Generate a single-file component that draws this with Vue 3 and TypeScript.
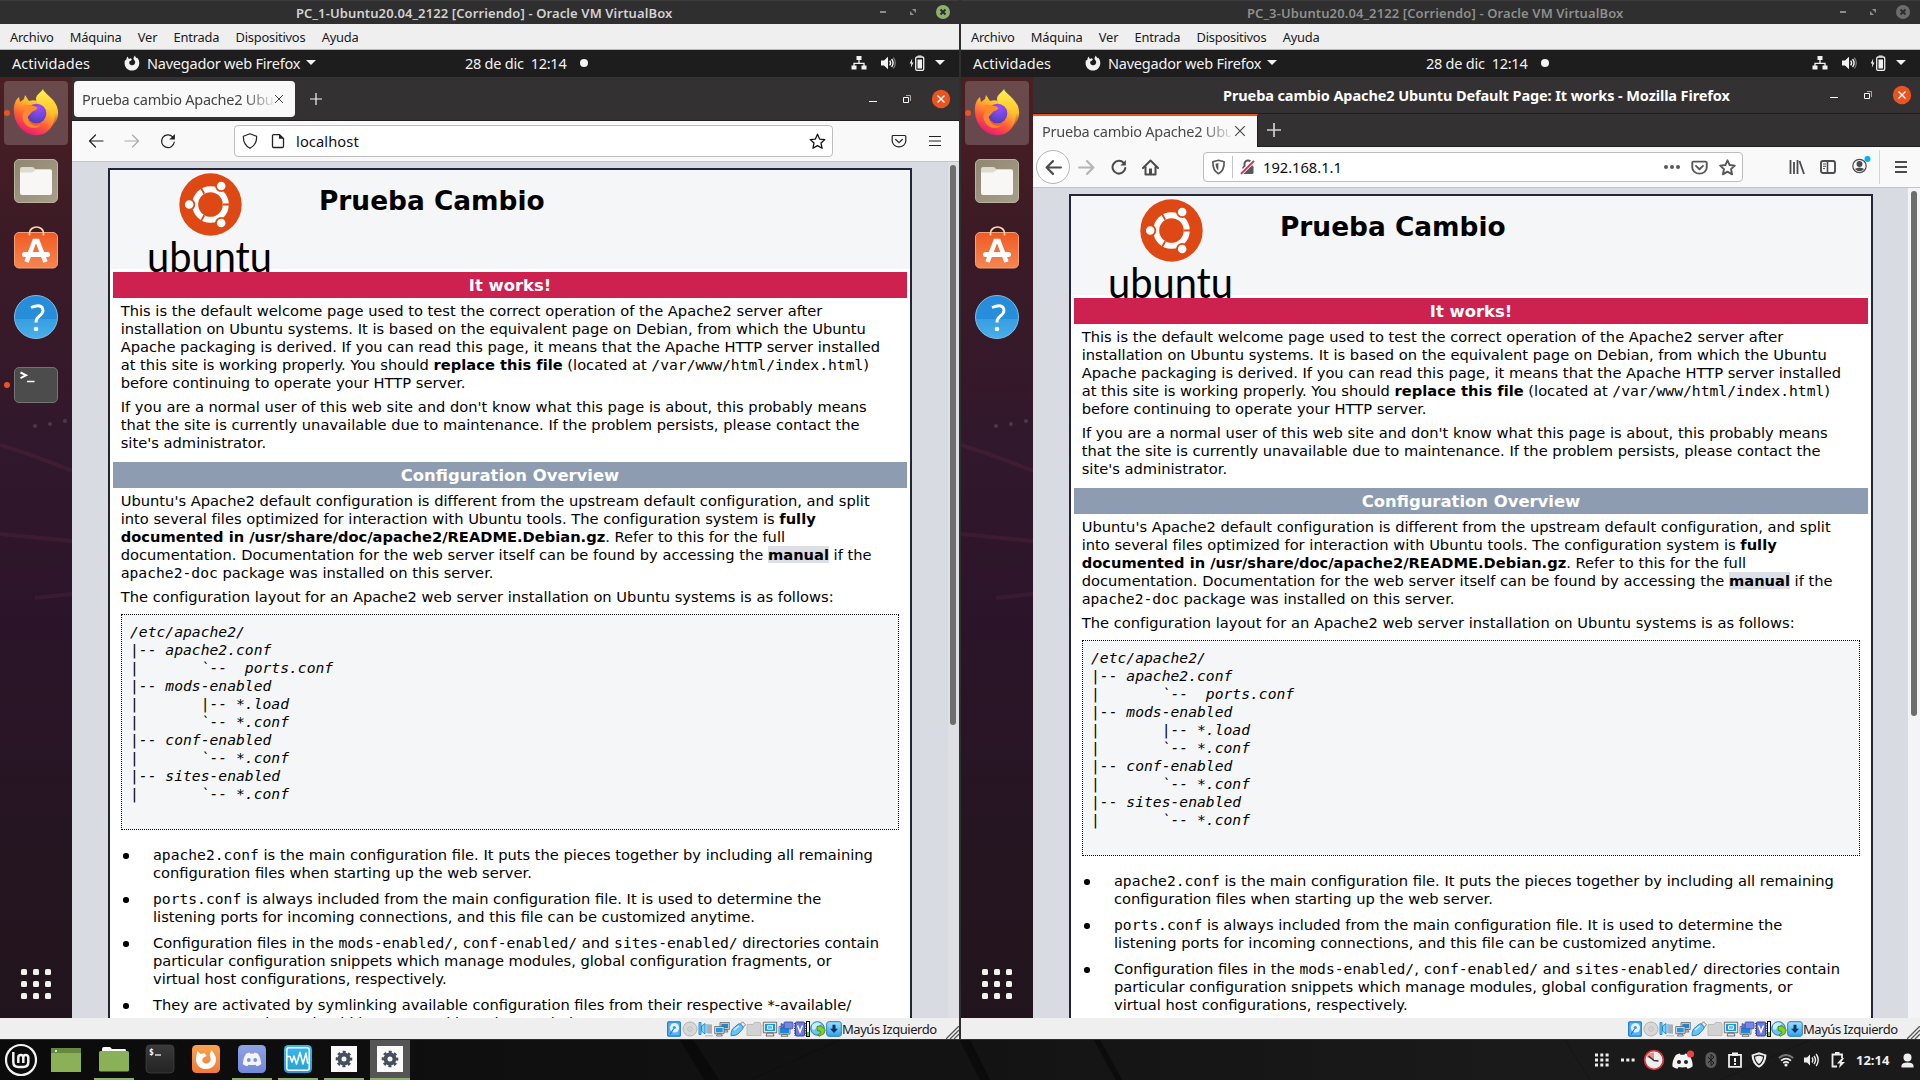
<script setup lang="ts">
interface Machine {
  id: number
  title: string
  active: boolean
  chrome: 'modern' | 'classic'
  url: string
  terminal: boolean
}

const machines: Machine[] = [
  { id: 1, title: 'PC_1-Ubuntu20.04_2122 [Corriendo] - Oracle VM VirtualBox', active: true, chrome: 'modern', url: 'localhost', terminal: true },
  { id: 3, title: 'PC_3-Ubuntu20.04_2122 [Corriendo] - Oracle VM VirtualBox', active: false, chrome: 'classic', url: '192.168.1.1', terminal: false },
]

const menu: string[] = ['Archivo', 'Máquina', 'Ver', 'Entrada', 'Dispositivos', 'Ayuda']

const tree: string = [
  '/etc/apache2/',
  '|-- apache2.conf',
  '|       `--  ports.conf',
  '|-- mods-enabled',
  '|       |-- *.load',
  '|       `-- *.conf',
  '|-- conf-enabled',
  '|       `-- *.conf',
  '|-- sites-enabled',
  '|       `-- *.conf',
  ' ',
].join('\n')

const devices: string[] = ['hdd', 'cd', 'audio', 'net', 'usb', 'folder', 'display', 'rec']

interface Task { icon: string; open: boolean; current: boolean }
const tasks: Task[] = [
  { icon: 'desktop', open: false, current: false },
  { icon: 'nemo', open: true, current: false },
  { icon: 'term', open: false, current: false },
  { icon: 'fox', open: false, current: false },
  { icon: 'discord', open: true, current: false },
  { icon: 'monitor', open: true, current: false },
  { icon: 'gear', open: true, current: false },
  { icon: 'gear', open: true, current: true },
]
</script>

<template>
  <div class="screen">
    <svg class="defs" width="0" height="0" aria-hidden="true">
      <defs>
        <linearGradient id="gFox" x1="0.8" y1="0" x2="0.3" y2="1">
          <stop offset="0" stop-color="#fff14a" /><stop offset="0.35" stop-color="#ffb32c" />
          <stop offset="0.65" stop-color="#ff5a38" /><stop offset="1" stop-color="#e6127d" />
        </linearGradient>
        <linearGradient id="gTail" x1="0" y1="0" x2="0" y2="1">
          <stop offset="0" stop-color="#fff44f" /><stop offset="0.6" stop-color="#ffc02e" /><stop offset="1" stop-color="#ff7139" stop-opacity="0.1" />
        </linearGradient>
        <radialGradient id="gGlobe" cx="0.6" cy="0.2" r="0.9">
          <stop offset="0" stop-color="#a04bff" /><stop offset="0.5" stop-color="#6e48d8" /><stop offset="1" stop-color="#4a3aa8" />
        </radialGradient>
        <linearGradient id="gBag" x1="0" y1="0" x2="0" y2="1"><stop offset="0" stop-color="#f05a24" /><stop offset="1" stop-color="#f58650" /></linearGradient>
        <linearGradient id="gFile" x1="0" y1="0" x2="1" y2="1"><stop offset="0" stop-color="#8e866f" /><stop offset="1" stop-color="#a89f8b" /></linearGradient>
        <linearGradient id="gBlue" x1="0" y1="0" x2="0" y2="1"><stop offset="0" stop-color="#9fe0ff" /><stop offset="1" stop-color="#2fa2ee" /></linearGradient>
        <linearGradient id="gHelp" x1="0" y1="0" x2="0" y2="1"><stop offset="0" stop-color="#268cd9" /><stop offset="0.54" stop-color="#268fdc" /><stop offset="0.55" stop-color="#379fe2" /><stop offset="1" stop-color="#4aaee8" /></linearGradient>
        <linearGradient id="gOrange" x1="0" y1="0" x2="0" y2="1"><stop offset="0" stop-color="#f9a351" /><stop offset="1" stop-color="#f07a36" /></linearGradient>
        <linearGradient id="gDisc" x1="0" y1="0" x2="0" y2="1"><stop offset="0" stop-color="#8ea1e1" /><stop offset="1" stop-color="#7289da" /></linearGradient>
        <linearGradient id="gCyan" x1="0" y1="0" x2="0" y2="1"><stop offset="0" stop-color="#35b9f0" /><stop offset="1" stop-color="#2aa0cf" /></linearGradient>
        <linearGradient id="gTerm" x1="0" y1="0" x2="0" y2="1"><stop offset="0" stop-color="#3a3a3a" /><stop offset="1" stop-color="#232323" /></linearGradient>
      </defs>
      <symbol id="firefox" viewBox="0 0 48 48">
        <path d="M2 25C1 17 4 11 7 9l1 5 4-3 1-4 4 6c3-1 6-1 8 0l3 3 3-8 6 8 4 4c3 7 2 13-1 18-4 7-11 10-18 9C11 46 3 36 2 25z" fill="url(#gFox)" />
        <path d="M31 1c1 5 14 10 15 22 1 8-4 16-12 18 6-6 6-14 2-19-3-4-12-4-12-11 0-5 5-6 7-10z" fill="url(#gTail)" />
        <circle cx="24.500" cy="25.500" r="9.800" fill="url(#gGlobe)" />
        <path d="M8 19c5-3 9-2 14-1 2 1 4 1 3 3-2 2-5 2-6 4-2 3-4 3-3 6 2 6 7 8 13 6-5 5-14 3-17-3-3-5-1-10 2-12z" fill="#ff8a2b" />
      </symbol>
      <symbol id="foxmono" viewBox="0 0 16 16">
        <path d="M1 5l1 .6L3.200 1.500 5 4l1.600-.8L8 4.300 6.600 6H5.800c-1 1.200-.8 3.200 1 4 2 .9 4.300-.3 4.400-2.400 0-1.200-.5-2-1.300-2.800C9 3.500 9.800 1.700 11 .4c.2 1.400 1 2 2 2.900V2.400c1.500 1.500 2.300 3.600 2.300 5.500 0 4.300-3.200 7.700-7.400 7.700S.6 12.300.6 8.300C.6 7 .7 6 1 5z" fill="#f2f2f2" />
      </symbol>
      <symbol id="net3" viewBox="0 0 16 16">
        <path d="M5.500 1h5v4h-5zM.5 10.500h5v4h-5zM10.500 10.500h5v4h-5z" fill="#f2f2f2" /><path d="M8 5v3M3 11V8.300h10V11" fill="none" stroke="#f2f2f2" stroke-width="1.300" />
      </symbol>
      <symbol id="vol" viewBox="0 0 16 16">
        <path d="M1 5.500h3L8 1.700v12.600L4 10.500H1z" fill="currentColor" /><path d="M9.700 5.600q1.800 2.400 0 4.800M11.600 4q3 4 0 8" fill="none" stroke="currentColor" stroke-width="1.400" /><path d="M13.400 2.600q3.800 5.400 0 10.800" fill="none" stroke="currentColor" stroke-width="1.200" opacity="0.450" />
      </symbol>
      <symbol id="batt" viewBox="0 0 16 16">
        <path d="M3.200 3.500L.7 8.400h1.600l-.5 4.300L4.500 7.500H2.900z" fill="#f2f2f2" /><rect x="6.700" y="2" width="8" height="13.300" rx="1.300" fill="none" stroke="#f2f2f2" stroke-width="1.300" /><path d="M8.500 4.500h4.500v9H8.500zM8.700.4h4v1.200h-4z" fill="#f2f2f2" />
      </symbol>
      <symbol id="star" viewBox="0 0 16 16">
        <path d="M8 1.200l2 4.500 4.900.5-3.600 3.300 1 4.900L8 11.900l-4.300 2.500 1-4.900L1.100 6.200 6 5.700z" fill="none" stroke="currentColor" stroke-linejoin="round" />
      </symbol>
      <symbol id="pocket" viewBox="0 0 16 16">
        <path d="M2.200 2.500h11.600q1 0 1 1V8a6.800 5.800 0 0 1-13.600 0V3.500q0-1 1-1z" fill="none" stroke="currentColor" /><path d="M4.700 6.500L8 9.600l3.300-3.100" fill="none" stroke="currentColor" stroke-linecap="round" stroke-linejoin="round" />
      </symbol>
      <symbol id="back" viewBox="0 0 16 16"><path d="M15 8H1.500M7.500 2L1.500 8l6 6" fill="none" stroke="currentColor" stroke-linecap="round" stroke-linejoin="round" /></symbol>
      <symbol id="fwd" viewBox="0 0 16 16"><path d="M1 8h13.500M8.500 2l6 6-6 6" fill="none" stroke="currentColor" stroke-linecap="round" stroke-linejoin="round" /></symbol>
      <symbol id="reload" viewBox="0 0 16 16"><path d="M14.300 9A6.400 6.400 0 1 1 12.700 3.900" fill="none" stroke="currentColor" stroke-linecap="round" /><path d="M14.900.9v5.600H9.300z" fill="currentColor" /></symbol>
      <symbol id="cross" viewBox="0 0 10 10"><path d="M1 1l8 8M9 1L1 9" fill="none" stroke="currentColor" /></symbol>

      <symbol id="hdd" viewBox="0 0 16 16"><rect x="1.700" y=".8" width="12.600" height="14.400" rx="1" fill="#58b4fa" stroke="#1577d8" stroke-width="1.200" /><ellipse cx="8.500" cy="6.800" rx="4.600" ry="4.800" fill="#e2f3ff" /><circle cx="8.300" cy="6.500" r="1.600" fill="#4693df" /><path d="M7.500 8L4 13.300" stroke="#2a72c8" stroke-width="1.200" /></symbol>
      <symbol id="cd" viewBox="0 0 16 16"><circle cx="8" cy="8" r="7" fill="#d8d8d8" stroke="#b4b4b4" /><circle cx="8" cy="8" r="2.200" fill="#eee" stroke="#aaa" stroke-width=".8" /><circle cx="8" cy="8" r=".7" fill="#999" /></symbol>
      <symbol id="audio" viewBox="0 0 16 16"><path d="M9.500 3H14v10H9.500zM7 14h8v1.500H7z" fill="#c7c7c7" /><path d="M10 5h4M10 7h4M10 9h4M10 11h4" stroke="#888" stroke-width=".8" /><path d="M1 1.500h2v12h-2zM3.500 5L7 2.600V13L3.500 10z" fill="#7dcfff" stroke="#1683c5" stroke-width=".9" /><path d="M9 3v9" stroke="#3ca4ea" fill="none" /></symbol>
      <symbol id="net" viewBox="0 0 16 16"><path d="M6 1.500h9.300v7H6zM9 9h4l1 2H8z" fill="#d8d8d8" stroke="#555" stroke-width=".7" /><path d="M7.300 2.800h6.700v4.400H7.300z" fill="#1688dc" /><path d="M.7 5.500H10v7.200H.7zM3.400 13h4l1 2h-6z" fill="#e2e2e2" stroke="#555" stroke-width=".7" /><path d="M2 6.800h6.700v4.500H2z" fill="#1c98e9" /></symbol>
      <symbol id="usb" viewBox="0 0 16 16"><path d="M10 3.500L12.500.8l3 3L13 6.500z" fill="#eee" stroke="#666" stroke-width=".8" /><path d="M1 14.700q-.3-3.600 1.500-6.700L8 3.300q1.700-1.200 3.200.2l1.500 1.800q1 1.400-.3 3L8 13q-2.600 2-7 1.700z" fill="#65c3f6" stroke="#2678b6" stroke-width=".9" /><path d="M4 9l5-4" stroke="#d4f2ff" stroke-width="1.500" /></symbol>
      <symbol id="folder" viewBox="0 0 16 16"><path d="M1 14.500V3.500h6l1.500-2H14l1 2v11z" fill="#d2d2d2" stroke="#bcbcbc" /></symbol>
      <symbol id="display" viewBox="0 0 16 16"><path d="M1.300 1.200h13.400v10.600H1.300zM5 12h6l1 3H4z" fill="#e5e5e5" stroke="#555" stroke-width=".8" /><path d="M3 3h10v7H3z" fill="#169be8" /><path d="M5.500 4.700h5v3.500h-5z" fill="#57b7f1" stroke="#fff" /></symbol>
      <symbol id="rec" viewBox="0 0 16 16"><path d="M1 5.500h11v7.700H1zM4 13.300h5l1 2H3z" fill="#ddd" stroke="#555" stroke-width=".7" /><path d="M2 6.500h9v5.700H2z" fill="#128ade" /><rect x="6" y="1" width="9" height="6.800" rx="1" fill="#7487e5" stroke="#3848a4" stroke-width=".8" /><path d="M3 2.500l3 1v3l-3 1z" fill="#6476d3" stroke="#3848a4" stroke-width=".6" /></symbol>
      <symbol id="cpu" viewBox="0 0 12 16"><rect x="1.500" y="1" width="9" height="14" rx="1" fill="#6b77d8" stroke="#3f458f" /><path d="M.5 2v12.500M11.500 2v12.500" stroke="#3f458f" stroke-dasharray="1.200 1.200" /><path d="M3.500 4.500L6 11l2.500-6.500" fill="none" stroke="#fff" stroke-width="1.500" /></symbol>
      <symbol id="mouse" viewBox="0 0 16 16"><circle cx="7.500" cy="7.500" r="6.800" fill="#69c4f8" stroke="#2379af" /><path d="M2 4q5-5 9-1L7 6 4 9 2 8z" fill="#c7edff" /><path d="M7 5.500l4-.7 4.300 4-1.600 4.200-4.700 2.300-1-1.500 3-2-1-1.800-2.600-.3z" fill="#87cf27" stroke="#3f8a12" stroke-width=".9" /></symbol>
      <symbol id="hostkey" viewBox="0 0 16 16"><rect x=".7" y=".7" width="14.600" height="14.600" rx="2.300" fill="url(#gBlue)" stroke="#2b7fb0" /><path d="M6.500 3.800h3v4H12l-4 4.300-4-4.300h2.500z" fill="#0b3468" /></symbol>

      <symbol id="desktop" viewBox="0 0 32 32"><path d="M1 4h30v24H1z" fill="#8bb158" /><path d="M1 4h30v5H1z" fill="#67883f" /><circle cx="6" cy="7" r="1" fill="#fff" /></symbol>
      <symbol id="nemo" viewBox="0 0 32 32"><path d="M4 8V5q0-2 2-2h6l2 2h13q1 0 1 2v3H4z" fill="#fff" /><rect x="1" y="7" width="30" height="20.500" rx="1.500" fill="#8bb158" /></symbol>
      <symbol id="term" viewBox="0 0 32 32"><rect x="2" y="1" width="28" height="28" rx="4" fill="url(#gTerm)" stroke="#4a4a4a" stroke-width=".6" /><path d="M11 11h6" stroke="#fff" stroke-width="1.200" /><text x="5" y="10.500" font-size="8" font-weight="bold" font-family="DejaVu Sans Mono, monospace" fill="#fff">$</text></symbol>
      <symbol id="fox" viewBox="0 0 32 32"><rect x="2" y="1" width="28" height="28" rx="4.500" fill="url(#gOrange)" /><path d="M7.500 7l3 3 4-.8 2.200 2.700-3.200 1.700c-2.600 2.600-.7 6.200 3 5.800 3.600-.4 5-3.600 3.600-6.500-1-2.300.2-4.500 1.800-6.800.3 2 3.600 4.300 4.100 8.500.6 5.700-3.800 10.500-10 10.500C10 25.100 5.800 20.500 6 15.500 6 11.900 7 10 7.500 7z" fill="#fff" /></symbol>
      <symbol id="discface" viewBox="0 0 24 18"><path d="M4.500 2.200Q7 .9 9 .7l.8 1.400q2.200-.3 4.400 0L15 .7q2 .2 4.500 1.500Q24 9 23.300 15.300 20.700 17.200 17.700 17.700l-1.300-2q-4.400 1-8.800 0l-1.300 2Q3.300 17.200.7 15.300 0 9 4.500 2.200z" fill="#f4f4f4" /></symbol>
      <symbol id="discord" viewBox="0 0 32 32"><rect x="2" y="1" width="28" height="28" rx="4.500" fill="url(#gDisc)" /><use href="#discface" x="6" y="8" width="20" height="14.500" /><circle cx="12.800" cy="16" r="1.900" fill="#7b90dd" /><circle cx="19.200" cy="16" r="1.900" fill="#7b90dd" /></symbol>
      <symbol id="monitor" viewBox="0 0 32 32"><rect x="2" y="1" width="28" height="28" rx="4.500" fill="url(#gCyan)" /><rect x="4.800" y="3.800" width="22.400" height="22.400" rx="2" fill="none" stroke="#fff" stroke-width="1.500" /><path d="M5 12.500h3l2 5.500 2-6 2.500 8L18 8.500l3 11.500 3-11 1.500 10h2" fill="none" stroke="#fff" stroke-width="1.500" stroke-linejoin="round" /></symbol>
      <symbol id="gear" viewBox="0 0 32 32"><path d="M3 2h26v26H3z" fill="#fafafa" /><circle cx="16" cy="15" r="4.500" fill="none" stroke="#44505f" stroke-width="4" /><circle cx="16" cy="15" r="7" fill="none" stroke="#44505f" stroke-width="2.600" stroke-dasharray="3 2.498" stroke-dashoffset="1.500" /></symbol>
    </svg>

    <div class="machines">
      <section v-for="m in machines" :key="m.id" class="machine" :class="m.chrome">
        <header class="vm-title" :class="{ dim: !m.active }">
          <span class="vm-name">{{ m.title }}</span>
          <svg class="vm-controls" width="76" height="24" viewBox="0 0 76 24">
            <path d="M3 12h6" stroke="#8c8c8c" stroke-width="2" />
            <path d="M35 9h4v4zM33 11v4h4z" fill="#8c8c8c" />
            <circle cx="66" cy="12" r="7" :fill="m.active ? '#8fb06c' : '#6c6c6c'" />
            <path d="M63.500 9.500l5 5M68.500 9.500l-5 5" stroke="#2c2c2c" stroke-width="2" />
          </svg>
        </header>
        <nav class="vm-menu"><span v-for="item in menu" :key="item">{{ item }}</span></nav>

        <div class="guest">
          <div class="topbar">
            <span class="activities">Actividades</span>
            <svg class="app-icon" width="16" height="16"><use href="#foxmono" /></svg>
            <span class="app-name">Navegador web Firefox</span>
            <i class="caret"></i>
            <span class="clock">28 de dic&nbsp; 12:14</span>
            <i class="dot"></i>
            <div class="indicators">
              <svg width="16" height="16"><use href="#net3" /></svg>
              <svg width="16" height="16"><use href="#vol" /></svg>
              <svg width="16" height="16"><use href="#batt" /></svg>
              <i class="caret"></i>
            </div>
          </div>

          <div class="workspace">
            <aside class="dock">
              <svg class="wall" width="72" height="941" viewBox="0 0 72 941">
                <g fill="none" stroke="#8b4050" stroke-opacity=".16" stroke-width="4">
                  <path d="M0 368q36 11 72 26M0 457l72 7M35 521l37-4" />
                </g>
                <g fill="#8b7080" fill-opacity=".35"><circle cx="35" cy="349" r="2" /><circle cx="50" cy="347" r="2" /><circle cx="65" cy="344" r="2" /></g>
              </svg>
              <div class="launcher focused"><i class="running"></i><svg class="lift" width="48" height="48"><use href="#firefox" /></svg></div>
              <div class="launcher">
                <svg width="44" height="44" viewBox="0 0 44 44"><rect x=".5" y=".5" width="43" height="43" rx="4.500" fill="url(#gFile)" stroke="#b9b29f" /><path d="M6 13V10q0-2 2-2h10q2 0 3 2h15q2 0 2 2v4H6z" fill="#dedace" /><path d="M6 13.500h12l4-2.500h14q2 0 2 2v21q0 2-2 2H8q-2 0-2-2z" fill="#f8f7f5" /></svg>
              </div>
              <div class="launcher">
                <svg class="lift" width="44" height="44" viewBox="0 0 44 44"><rect x=".5" y="6.500" width="43" height="35.500" rx="4.500" fill="url(#gBag)" stroke="#f6a077" /><path d="M15.500 9.500V7a7 6 0 0 1 14 0v2.500" fill="none" stroke="#f7d9a8" stroke-width="1.700" /><path d="M12.500 36l8-21h3l8 21" fill="none" stroke="#fff" stroke-width="4.500" /><path d="M10.500 28.500h23" stroke="#fff" stroke-width="5" stroke-linecap="round" /></svg>
              </div>
              <div class="launcher">
                <svg width="44" height="44" viewBox="0 0 44 44"><circle cx="22" cy="22" r="21.500" fill="url(#gHelp)" stroke="#7bbfe8" /><path d="M17 12.500q11.500-4.500 12 3 0 3-4 5.800-3.200 2.500-3 6.200" fill="none" stroke="#fff" stroke-width="2.900" /><circle cx="22" cy="34" r="2.300" fill="#fff" /></svg>
              </div>
              <div v-if="m.terminal" class="launcher">
                <i class="running"></i>
                <svg width="44" height="44" viewBox="0 0 44 44"><rect x=".5" y="4.500" width="43" height="35" rx="4.500" fill="#4c4c4c" stroke="#747474" /><path d="M6.500 9.500l5.500 2.800-5.500 2.800" fill="none" stroke="#fff" stroke-width="2" /><path d="M13 18.500h7.500" stroke="#fff" stroke-width="1.500" /></svg>
              </div>
              <div class="apps"><i v-for="n in 9" :key="n"></i></div>
            </aside>

            <main class="browser">
              <template v-if="m.chrome === 'modern'">
                <div class="tabstrip">
                  <div class="tab"><span class="tab-label">Prueba cambio Apache2 Ubuntu</span><svg width="10" height="10"><use href="#cross" /></svg></div>
                  <svg class="plus" width="12" height="12" viewBox="0 0 12 12"><path d="M6 0v12M0 6h12" stroke="#f5f5f5" stroke-width="1.200" /></svg>
                  <svg class="winctl" width="86" height="20" viewBox="-10 0 86 20"><path d="M-6 12.500h8" stroke="#fff" /><path d="M28.500 8.500h5v5h-5z" fill="none" stroke="#fff" /><path d="M31 6.500h4.500V12" fill="none" stroke="#aaa" /><circle cx="66" cy="10" r="9.200" fill="#e95420" /><path d="M62.500 6.500l7 7M69.500 6.500l-7 7" stroke="#fff" stroke-width="1.400" /></svg>
                </div>
                <div class="toolbar">
                  <svg class="b-back" width="16" height="16"><use href="#back" /></svg>
                  <svg class="b-fwd" width="16" height="16"><use href="#fwd" /></svg>
                  <svg class="b-rel" width="16" height="16"><use href="#reload" /></svg>
                  <div class="urlbar">
                    <svg width="16" height="16" viewBox="0 0 16 16"><path d="M8 .8l6.600 2.500Q15 11.500 8 15.300 1 11.500 1.400 3.300z" fill="none" stroke="#222" stroke-linejoin="round" stroke-width="1.200" /></svg>
                    <svg class="pageicon" width="16" height="16" viewBox="0 0 16 16"><path d="M9.500 1.600H3.700q-1.200 0-1.200 1.200v10.500q0 1.200 1.200 1.200h8.600q1.200 0 1.200-1.200V5.500z" fill="none" stroke="#222" stroke-width="1.300" /><path d="M9 1.200v4.600h5z" fill="#222" /></svg>
                    <span class="address">{{ m.url }}</span>
                    <svg class="bookmark" width="17" height="17"><use href="#star" /></svg>
                  </div>
                  <svg class="b-pocket" width="16" height="16"><use href="#pocket" /></svg>
                  <svg class="b-menu" width="12" height="12" viewBox="0 0 12 12"><path d="M0 1.500h12M0 6h12M0 10.500h12" stroke="#222" stroke-width="1.200" /></svg>
                </div>
              </template>
              <template v-else>
                <div class="ff-title">
                  <span class="ff-name">Prueba cambio Apache2 Ubuntu Default Page: It works - Mozilla Firefox</span>
                  <svg class="winctl" width="86" height="20" viewBox="-10 0 86 20"><path d="M-6 12.500h8" stroke="#fff" /><path d="M28.500 8.500h5v5h-5z" fill="none" stroke="#fff" /><path d="M31 6.500h4.500V12" fill="none" stroke="#aaa" /><circle cx="66" cy="10" r="9.200" fill="#e95420" /><path d="M62.500 6.500l7 7M69.500 6.500l-7 7" stroke="#fff" stroke-width="1.400" /></svg>
                </div>
                <div class="tabstrip">
                  <div class="tab"><span class="tab-label">Prueba cambio Apache2 Ubuntu</span><svg width="12" height="12"><use href="#cross" /></svg></div>
                  <svg class="plus" width="14" height="14" viewBox="0 0 14 14"><path d="M7 0v14M0 7h14" stroke="#d0d0d0" stroke-width="1.700" /></svg>
                </div>
                <div class="toolbar">
                  <div class="round"><svg width="17" height="17"><use href="#back" /></svg></div>
                  <svg class="b-fwd" width="17" height="17"><use href="#fwd" /></svg>
                  <svg class="b-rel" width="16" height="16"><use href="#reload" /></svg>
                  <svg class="b-home" width="17" height="17" viewBox="0 0 17 17"><path d="M1 9l7.500-7.500L16 9M3.500 8v7.500h10V8" fill="none" stroke="#4c4c4f" stroke-width="2" stroke-linejoin="round" stroke-linecap="round" /><path d="M7 9.500h3V15H7z" fill="#4c4c4f" /></svg>
                  <div class="urlbar">
                    <svg width="15" height="16" viewBox="0 0 15 16"><path d="M7.500 1.300l5.600 1.400q.4 8.600-5.600 12-6-3.400-5.600-12z" fill="none" stroke="#58585b" stroke-width="1.700" stroke-linejoin="round" /><path d="M7.300 4v7.500Q4.500 9 4.600 4.700z" fill="#58585b" /></svg>
                    <i class="sep"></i>
                    <svg class="lock" width="16" height="16" viewBox="0 0 16 16"><path d="M4.500 7V5a3.500 3.500 0 0 1 7 0v2" fill="none" stroke="#58585b" stroke-width="2" /><rect x="2.500" y="7" width="11" height="8" rx="1.300" fill="#58585b" /><path d="M1 14.500L14 1.500" stroke="#f9f9fa" stroke-width="4" /><path d="M1 14.800L14 1.800" stroke="#e22850" stroke-width="1.900" /></svg>
                    <span class="address">{{ m.url }}</span>
                    <svg class="more" width="16" height="6" viewBox="0 0 16 6"><circle cx="2" cy="3" r="2" /><circle cx="8" cy="3" r="2" /><circle cx="14" cy="3" r="2" /></svg>
                    <svg class="pk" width="17" height="17"><use href="#pocket" /></svg>
                    <svg class="st" width="17" height="17"><use href="#star" /></svg>
                  </div>
                  <svg class="b-lib" width="16" height="16" viewBox="0 0 16 16"><path d="M1.500 1v14M5 3v12M8.500 1v14M10.500 2L15 15" fill="none" stroke="#4c4c4f" stroke-width="1.800" /></svg>
                  <svg class="b-side" width="16" height="16" viewBox="0 0 16 16"><rect x="1" y="2" width="14" height="12" rx="2" fill="none" stroke="#4c4c4f" stroke-width="1.900" /><path d="M7.500 2v12" stroke="#4c4c4f" stroke-width="1.600" /><path d="M3 5h3M3 7.300h3M3 9.600h2" stroke="#4c4c4f" /></svg>
                  <svg class="b-acct" width="20" height="20" viewBox="0 0 20 20"><circle cx="8.500" cy="11" r="6.700" fill="none" stroke="#4c4c4f" stroke-width="1.200" /><circle cx="8.500" cy="9" r="3" fill="#4c4c4f" /><path d="M3.800 14q4.700-3 9.400 0-4.400 4.500-9.400 0z" fill="#4c4c4f" /><circle cx="16.500" cy="4" r="3" fill="#00b3f4" /></svg>
                  <i class="tsep"></i>
                  <svg class="b-menu" width="12" height="12" viewBox="0 0 12 12"><path d="M0 1h12M0 6h12M0 11h12" stroke="#4c4c4f" stroke-width="1.900" /></svg>
                </div>
              </template>

              <div class="viewport">
                <div class="page-area">
                  <article class="main-page">
                    <div class="page-header">
                      <svg class="logo" width="124" height="102" viewBox="0 0 124 102">
                        <circle cx="62.500" cy="31.500" r="31.200" fill="#dd4814" />
                        <circle cx="62.500" cy="31.500" r="15.300" fill="none" stroke="#fff" stroke-width="6" />
                        <path d="M75 31.500h8M56.300 20.700l-4-6.900M56.300 42.300l-4 6.900" stroke="#dd4814" stroke-width="1.800" />
                        <g fill="#fff" stroke="#dd4814" stroke-width="1.800"><circle cx="41.200" cy="31.500" r="5.200" /><circle cx="73.200" cy="13" r="5.200" /><circle cx="73.200" cy="50" r="5.200" /></g>
                        <text x="-1" y="98.700" textLength="125" lengthAdjust="spacingAndGlyphs" font-family="Lato, sans-serif" font-size="42">ubuntu</text>
                      </svg>
                      <span class="headline">Prueba Cambio</span>
                    </div>
                    <div class="content">
                      <h2 class="works">It works!</h2>
                      <div class="text">
                        <p>This is the default welcome page used to test the correct operation of the Apache2 server after installation on Ubuntu systems. It is based on the equivalent page on Debian, from which the Ubuntu Apache packaging is derived. If you can read this page, it means that the Apache HTTP server installed at this site is working properly. You should <b>replace this file</b> (located at <code>/var/www/html/index.html</code>) before continuing to operate your HTTP server.</p>
                        <p>If you are a normal user of this web site and don't know what this page is about, this probably means that the site is currently unavailable due to maintenance. If the problem persists, please contact the site's administrator.</p>
                      </div>
                      <h2>Configuration Overview</h2>
                      <div class="text">
                        <p>Ubuntu's Apache2 default configuration is different from the upstream default configuration, and split into several files optimized for interaction with Ubuntu tools. The configuration system is <b>fully documented in /usr/share/doc/apache2/README.Debian.gz</b>. Refer to this for the full documentation. Documentation for the web server itself can be found by accessing the <a>manual</a> if the <code>apache2-doc</code> package was installed on this server.</p>
                        <p>The configuration layout for an Apache2 web server installation on Ubuntu systems is as follows:</p>
                        <pre>{{ tree }}</pre>
                        <ul>
                          <li><code>apache2.conf</code> is the main configuration file. It puts the pieces together by including all remaining configuration files when starting up the web server.</li>
                          <li><code>ports.conf</code> is always included from the main configuration file. It is used to determine the listening ports for incoming connections, and this file can be customized anytime.</li>
                          <li>Configuration files in the <code>mods-enabled/</code>, <code>conf-enabled/</code> and <code>sites-enabled/</code> directories contain particular configuration snippets which manage modules, global configuration fragments, or virtual host configurations, respectively.</li>
                          <li>They are activated by symlinking available configuration files from their respective *-available/ counterparts. These should be managed by using our helpers</li>
                        </ul>
                      </div>
                    </div>
                  </article>
                </div>
                <div class="scroll"><i></i></div>
              </div>
            </main>
          </div>
        </div>

        <footer class="vm-status">
          <svg v-for="d in devices" :key="d" width="16" height="16"><use :href="'#' + d" /></svg>
          <svg width="12" height="16"><use href="#cpu" /></svg>
          <i class="load"></i>
          <svg width="16" height="16"><use href="#mouse" /></svg>
          <svg width="16" height="16"><use href="#hostkey" /></svg>
          <span>Mayús Izquierdo</span>
          <svg class="grip" width="13" height="13" viewBox="0 0 13 13"><path d="M0 13L13 0M4 13l9-9M8 13l5-5" stroke="#555" stroke-width="1.300" /></svg>
        </footer>
      </section>
    </div>

    <div class="panel">
      <svg class="panel-art" width="1920" height="40" viewBox="0 0 1920 40"><path d="M178 0l22 40M680 0l25 40h14L693 0zM840 0L750 40M960 0l20 40h10L970 0zM1094 0l22 40h6L1100 0zM1565 0l25 40M1810 0l-90 40" fill="#000" stroke="#000" stroke-opacity=".5" opacity=".4" /></svg>
      <svg class="mint" width="34" height="34" viewBox="0 0 34 34"><circle cx="17" cy="17" r="15" fill="none" stroke="#f2f2f2" stroke-width="2.200" /><path d="M9.300 9v10q0 5 5 5h5q5 0 5-5v-4.500a2.500 2.500 0 0 0-5 0V20M14.300 20v-5.500a2.500 2.500 0 0 1 5 0" fill="none" stroke="#f2f2f2" stroke-width="2.500" /></svg>
      <div v-for="(t, i) in tasks" :key="i" class="task" :class="{ open: t.open, current: t.current }">
        <svg width="32" height="32"><use :href="'#' + t.icon" /></svg>
      </div>
      <div class="tray">
        <svg width="14" height="14" viewBox="0 0 14 14"><path d="M0 2h14M0 7h14M0 12h14" stroke="#eee" stroke-width="3" stroke-dasharray="3 2.300" /></svg>
        <svg class="t-more" width="14" height="4" viewBox="0 0 14 4"><path d="M0 2h14" stroke="#eee" stroke-width="3" stroke-dasharray="3 2.300" /></svg>
        <svg class="t-clock" width="22" height="22" viewBox="0 0 22 22"><circle cx="11" cy="11" r="9.300" fill="#eee" stroke="#d7373f" stroke-width="1.800" /><path d="M11 11V3.500A7.500 7.500 0 0 0 3.500 8z" fill="#e88" /><path d="M5.500 7l5.500 4.500 4.500.5" fill="none" stroke="#333" stroke-width="1.500" /></svg>
        <svg class="t-disc" width="24" height="20" viewBox="0 0 24 20"><use href="#discface" x="0" y="3" width="23" height="16" /><circle cx="8" cy="12" r="2" fill="#222" /><circle cx="15" cy="12" r="2" fill="#222" /><circle cx="19.500" cy="4" r="3.600" fill="#ed4245" /></svg>
        <svg class="t-bt" width="12" height="16" viewBox="0 0 12 16"><rect x=".5" width="11" height="16" rx="5.500" fill="#5a5a5a" /><path d="M3 5l6 6-3 2.500v-11L9 5l-6 6" fill="none" stroke="#1a1a1a" /></svg>
        <svg class="t-clip" width="14" height="16" viewBox="0 0 14 16"><path d="M1 2.800h12v12H1z" fill="none" stroke="#eee" stroke-width="1.800" /><path d="M4 .5h6V4H4zM6 6h2v4H6zM6 11h2v2H6z" fill="#eee" /></svg>
        <svg class="t-shield" width="16" height="16" viewBox="0 0 16 16"><path d="M8 .3l7.500 2.400Q15.200 12 8 15.800.8 12 .5 2.700z" fill="#eee" /><path d="M8 3l4.600 1.300Q12.300 10 8 12.800 3.700 10 3.400 4.300z" fill="none" stroke="#1b1b1b" stroke-width="1.200" /></svg>
        <svg class="t-wifi" width="16" height="16" viewBox="0 0 16 16"><path d="M.8 6q7.200-6 14.400 0" fill="none" stroke="#777" stroke-width="2" /><path d="M3 8.600q5-4 10 0M5.200 11q2.800-2.300 5.600 0" fill="none" stroke="#eee" stroke-width="1.800" /><circle cx="8" cy="13" r="1.600" fill="#eee" /></svg>
        <svg class="t-vol" width="16" height="16" viewBox="0 0 16 16"><path d="M1 5.500h3L7 2.500v11L4 10.500H1z" fill="#eee" /><path d="M9 5.500q1.700 2.500 0 5M11 3.800q3 4.200 0 8.400M13.200 2q4 6 0 12" fill="none" stroke="#eee" stroke-width="1.400" /></svg>
        <svg class="t-bat" width="15" height="16" viewBox="0 0 15 16"><path d="M6 14.500H1.500V2.500h9.500V6M4 1h4.500" fill="none" stroke="#eee" stroke-width="1.800" /><path d="M11 6l-5 5.500h3L8 16l6-6h-3.500L13 6z" fill="#eee" /></svg>
        <span class="t-time">12:14</span>
        <svg class="t-user" width="13" height="15" viewBox="0 0 13 15"><circle cx="6.500" cy="4.500" r="4" fill="#eee" /><path d="M.5 14.500v-2Q1 9.500 6.500 9.500t6 3v2z" fill="#eee" /></svg>
      </div>
    </div>
  </div>
</template>

<style>
html, body { margin: 0; padding: 0; overflow: hidden; background: #111; }
</style>

<style scoped>
* { box-sizing: border-box; }
svg { display: block; flex: none; }
.defs { position: absolute; }
.screen { width: 1920px; height: 1080px; overflow: hidden; display: flex; flex-direction: column; font-family: "Noto Sans", sans-serif; background: #2b2b2b; }
.machines { display: flex; height: 1040px; }
.machine { width: 960px; height: 1040px; display: flex; flex-direction: column; background: #2f2f2f; padding-bottom: 1px; }
.modern { padding-right: 1px; }
.classic { padding-left: 1px; }

.vm-title { height: 24px; display: flex; align-items: center; background: #2f2f2f; border-top: 1px solid #3c3c3c; color: #d2d2d2; }
.vm-name { flex: 1; padding-left: 296px; white-space: nowrap; font-size: 13px; font-weight: 600; letter-spacing: 0.11px; line-height: 18px; }
.classic .vm-name { padding-left: 286px; }
.dim { color: #8e8e8e; }
.vm-controls { margin-top: -1px; }
.modern .vm-controls { margin-right: 6px; }
.classic .vm-controls { margin-right: 7px; }
.vm-menu { height: 26px; display: flex; align-items: center; gap: 16.3px; padding: 1px 0 0 10px; background: #efefef; border-bottom: 1px solid #b8b8b8; color: #1a1a1a; font-size: 12.9px; letter-spacing: -0.23px; }

.guest { height: 968px; display: flex; flex-direction: column; }
.topbar { height: 27px; padding-bottom: 2px; background: #1d1d1d; display: flex; align-items: center; color: #f2f2f2; font-size: 14.5px; line-height: 20px; white-space: nowrap; }
.activities { width: 113px; padding-left: 12px; letter-spacing: 0.05px; }
.app-icon { margin: 0 7px 0 11px; }
.app-name { width: 159px; letter-spacing: -0.22px; }
.caret { border: 5px solid transparent; border-top: 5px solid #f2f2f2; border-bottom: 0; }
.clock { margin-left: 149px; width: 115px; letter-spacing: -0.25px; }
.dot { width: 8px; height: 8px; border-radius: 50%; background: #f2f2f2; }
.indicators { margin-left: auto; margin-right: 14px; display: flex; align-items: center; gap: 13px; }
.indicators .caret { margin-left: -3px; }

.workspace { flex: 1; display: flex; min-height: 0; }
.dock { position: relative; width: 72px; display: flex; flex-direction: column; padding-top: 4px; background: linear-gradient(#492022 0, #3b1a26 18%, #32182c 38%, #2c142a 56%, #241520 85%, #22141c 100%); }
.wall { position: absolute; left: 0; top: 0; }
.launcher { position: relative; width: 64px; height: 64px; margin: 0 4px 4px; display: flex; align-items: center; justify-content: center; }
.lift { margin-bottom: 3px; }
.focused { background: rgba(255, 255, 255, 0.19); border-radius: 4px; }
.running { position: absolute; left: 0; top: 29px; width: 6px; height: 6px; border-radius: 50%; background: #e95420; }
.apps { margin: auto 0 19px 21px; display: grid; grid-template-columns: repeat(3, 6px); gap: 6px; }
.apps i { width: 6px; height: 6px; border-radius: 1.500px; background: #f1f1ee; }

.browser { flex: 1; min-width: 0; display: flex; flex-direction: column; }
.tabstrip { display: flex; align-items: center; background: #333132; }
.tab { display: flex; align-items: center; background: #f9f9fa; color: #444; }
.tab-label { overflow: hidden; white-space: nowrap; font-size: 14.5px; letter-spacing: -0.24px; line-height: 20px; mask-image: linear-gradient(to right, #000 85%, transparent 102%); }
.modern .tabstrip { height: 44px; border-bottom: 1px solid #1f1f1f; }
.modern .tab { width: 221px; height: 36px; margin: 1px 0 0 2px; padding: 0 11px 1px 8px; border-radius: 4px; }
.modern .tab-label { width: 191px; margin-right: 1px; }
.plus { margin-left: 15px; }
.winctl { margin-left: auto; margin-right: 8px; }
.modern .winctl { margin-top: 1px; }
.toolbar { display: flex; align-items: center; background: #f9f9fa; border-bottom: 1px solid #c4c4c8; color: #222; }
.modern .toolbar { height: 41px; }
.modern .toolbar use { stroke-width: 1.2; }
.modern .b-back { margin-left: 16px; }
.modern .b-fwd { margin-left: 20px; color: #a9a9a9; }
.modern .b-rel { margin-left: 20px; }
.urlbar { display: flex; align-items: center; background: #fff; border: 1px solid #bdbdc0; border-radius: 4px; color: #111; }
.modern .urlbar { width: 599px; height: 32px; margin-left: 58px; padding-left: 7px; }
.modern .pageicon { margin-left: 12px; }
.address { font-size: 14.67px; line-height: 20px; letter-spacing: 0.1px; }
.modern .address { margin-left: 10px; }
.bookmark { margin-left: auto; margin-right: 6px; }
.b-pocket { margin-left: 58px; }
.modern .b-menu { margin-left: 22px; }

.ff-title { height: 37px; background: #333132; border-bottom: 1px solid #1f1f1f; display: flex; align-items: center; }
.ff-name { margin-left: 190px; color: #fff; font-size: 14.5px; font-weight: bold; letter-spacing: -0.1px; white-space: nowrap; line-height: 20px; }
.classic .tabstrip { height: 33px; border-bottom: 1px solid #1f1f1f; }
.classic .tab { width: 225px; height: 33px; margin-top: 1px; border-top: 2px solid #e95420; border-right: 1px solid #1f1f1f; padding: 0 11px 2px 9px; color: #4a4a4a; }
.classic .tab-label { width: 189px; margin-right: 3px; }
.classic .plus { margin-left: 9px; }
.classic .toolbar { height: 41px; color: #4c4c4f; }
.classic .toolbar > svg use, .round use { stroke-width: 2; }
.classic .urlbar svg use { stroke-width: 1.8; }
.round { width: 34px; height: 34px; margin-left: 3px; border: 1px solid #b5b5b8; border-radius: 50%; background: #fff; display: flex; align-items: center; justify-content: center; }
.classic .b-fwd { margin-left: 8px; color: #b6b6b8; }
.classic .b-rel { margin-left: 16px; }
.b-home { margin-left: 15px; }
.classic .urlbar { width: 540px; height: 30px; margin-left: 44px; padding-left: 7px; color: #58585b; }
.sep { width: 1px; height: 22px; margin-left: 6px; background: #c4c4c8; }
.lock { margin-left: 7px; }
.classic .address { margin-left: 7px; color: #0c0c0d; letter-spacing: 0; }
.more { margin-left: auto; fill: #58585b; }
.pk { margin-left: 11px; }
.st { margin-left: 11px; margin-right: 6px; }
.b-lib { margin-left: 46px; }
.b-side { margin-left: 15px; }
.b-acct { margin-left: 15px; margin-top: -4px; }
.tsep { width: 1px; height: 34px; margin-left: 8px; background: #d4d4d6; }
.classic .b-menu { margin-left: 15px; }

.viewport { flex: 1; min-height: 0; display: flex; overflow: hidden; background: #d8dbe2; }
.page-area { width: 876px; overflow: hidden; padding-top: 6px; }
.scroll { width: 11px; background: #dddfe5; padding: 3px 0 0 2px; }
.scroll i { display: block; width: 6px; height: 560px; border-radius: 3px; background: #6d6d6d; }
.classic .page-area { width: 875px; padding-left: 0; }
.classic .main-page { margin-left: 36px; }
.classic .scroll { width: 12px; padding-left: 3px; background: #f4f4f6; }
.classic .scroll i { height: 525px; }
.main-page { width: 804px; margin: 0 auto; border: 2px solid #212738; background: #fff; font-family: "DejaVu Sans", Verdana, sans-serif; font-size: 14.667px; line-height: 18px; color: #000; }
.page-header { height: 99px; display: flex; background: #f5f6f7; }
.logo { position: relative; z-index: 1; margin: 3px 0 0 38px; overflow: visible; }
.headline { margin: 15px 0 0 47px; font-size: 26.4px; line-height: 31px; font-weight: bold; }
.content { margin: 3px; }
h2 { margin: 0; height: 26px; padding: 4px 6px 2px; font-size: 16.43px; line-height: 20px; font-weight: bold; text-align: center; color: #fff; background: #8e9cb2; }
h2.works { background: #cd214f; }
.text { padding: 4px 8px; }
p { margin: 0 4px 6px -0.3px; letter-spacing: 0.008px; }
code, pre { font-family: "DejaVu Sans Mono", monospace; font-size: 14.667px; }
code { line-height: 1; }
a { font-weight: bold; background: #dcdfe6; }
pre { margin: 8px 0; padding: 8px; border: 1px dotted #000; background: #f5f6f7; font-style: italic; line-height: 18px; height: 216px; letter-spacing: 0.01px; }
ul { margin: 0; padding: 4px 8px 4px 16px; list-style: none; }
li { position: relative; padding: 4px 10px 4px 16px; }
li::before { content: ""; position: absolute; left: -14px; top: 11px; width: 5.500px; height: 5.500px; border-radius: 50%; background: #000; }

.vm-status { height: 21px; display: flex; align-items: center; background: #efefef; padding-left: 666px; color: #1a1a1a; font-size: 13px; letter-spacing: -0.46px; position: relative; }
.vm-status > svg:not(.grip), .load { margin-top: 1px; }
.load { width: 4px; height: 16px; border: 1px solid #000; background: linear-gradient(#fff 75%, #3fe01c 75%); }
.vm-status span { line-height: 18px; padding-top: 1px; white-space: nowrap; }
.grip { position: absolute; right: 0; bottom: 0; }

.panel { position: relative; height: 40px; display: flex; background: linear-gradient(to right, #0b0b0b, #131313 50%, #1a1a1a 80%); }
.panel-art { position: absolute; left: 0; top: 0; }
.mint { position: relative; margin: 3px 0 0 4px; width: 34px; }
.task { position: relative; width: 40px; height: 40px; margin-right: 6px; padding: 4px 4px 0; border-bottom: 2px solid transparent; }
.mint + .task { margin-left: 8px; margin-right: 2px; }
.mint + .task + .task { margin-left: 6px; }
.open { border-bottom-color: #8fb06c; }
.current { background: #555; }
.tray { position: relative; margin-left: auto; display: flex; align-items: center; padding-right: 6px; }
.t-more { margin-left: 12px; }
.t-clock { margin-left: 8px; }
.t-disc { margin-left: 6px; }
.t-bt { margin-left: 10px; }
.t-clip { margin-left: 11px; }
.t-shield { margin-left: 9px; }
.t-wifi { margin-left: 11px; }
.t-vol { margin-left: 9px; }
.t-bat { margin-left: 12px; }
.t-time { width: 35px; margin-left: 10px; color: #eee; font-size: 13px; font-weight: bold; }
.t-user { margin-left: 10px; }
</style>
